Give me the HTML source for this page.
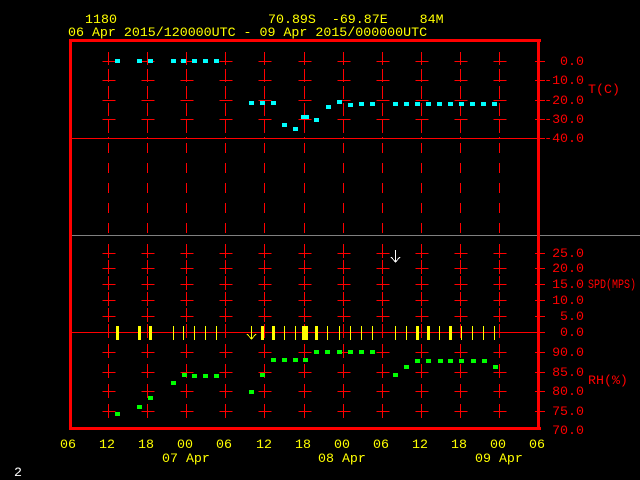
<!DOCTYPE html>
<html><head><meta charset="utf-8"><style>
html,body{margin:0;padding:0;background:#000;width:640px;height:480px;overflow:hidden}
svg{display:block}
text{font-family:"Liberation Mono",monospace;font-size:13.3px}
.y{fill:#ffff00}.r{fill:#ff0000}
</style></head><body>
<svg id="s" width="640" height="480" xmlns="http://www.w3.org/2000/svg">
<rect width="640" height="480" fill="#000"/>
<g id="g" shape-rendering="crispEdges"></g>
<text x="85" y="23" class="y">1180</text>
<text x="268" y="23" class="y" xml:space="preserve">70.89S  -69.87E    84M</text>
<text x="68" y="36" class="y">06 Apr 2015/120000UTC - 09 Apr 2015/000000UTC</text>
<g class="r" text-anchor="end">
<text x="584" y="65">0.0</text><text x="584" y="84">-10.0</text><text x="584" y="104">-20.0</text><text x="584" y="123">-30.0</text><text x="584" y="142">-40.0</text>
<text x="584" y="257">25.0</text><text x="584" y="272">20.0</text><text x="584" y="288">15.0</text><text x="584" y="304">10.0</text><text x="584" y="320">5.0</text><text x="584" y="336">0.0</text>
<text x="584" y="356">90.0</text><text x="584" y="376">85.0</text><text x="584" y="395">80.0</text><text x="584" y="415">75.0</text><text x="584" y="434">70.0</text>
</g>
<text x="588" y="93" class="r">T(C)</text>
<text x="588" y="288" class="r" textLength="48" lengthAdjust="spacingAndGlyphs">SPD(MPS)</text>
<text x="588" y="384" class="r">RH(%)</text>
<g class="y">
<text x="60" y="448">06</text><text x="99" y="448">12</text><text x="138" y="448">18</text><text x="177" y="448">00</text><text x="216" y="448">06</text><text x="256" y="448">12</text><text x="295" y="448">18</text><text x="334" y="448">00</text><text x="373" y="448">06</text><text x="412" y="448">12</text><text x="451" y="448">18</text><text x="490" y="448">00</text><text x="529" y="448">06</text>
<text x="162" y="462">07 Apr</text><text x="318" y="462">08 Apr</text><text x="475" y="462">09 Apr</text>
</g>
<text x="14" y="476" fill="#fff">2</text>
</svg>
<script>
var g=document.getElementById('g'),h='';
function L(x1,y1,x2,y2,c,w,d){h+='<line x1="'+x1+'" y1="'+y1+'" x2="'+x2+'" y2="'+y2+'" stroke="'+c+'" stroke-width="'+(w||1)+'"'+(d?' stroke-dasharray="'+d+'"':'')+'/>';}
function R(x,y,w,hh,c){h+='<rect x="'+x+'" y="'+y+'" width="'+w+'" height="'+hh+'" fill="'+c+'"/>';}
var red='#ff0000';
L(70,138.5,545,138.5,red);L(70,235.5,640,235.5,'#808080');L(70,332.5,545,332.5,red);
var cols=[];for(var k=0;k<11;k++)cols.push(Math.round(108+39.1*k)+0.5);
var tY=[61,80,100,119],sY=[253,268,284,300,316],rY=[352,372,391,411];
cols.forEach(function(x){
 L(x,52,x,138,red,1,'13 4');L(x,143,x,235,red,1,'10 10');
 L(x,244,x,340,red,1,'14 2');L(x,344,x,420,red,1,'14 6');
 tY.concat(sY,rY).forEach(function(y){L(x-6,y+.5,x+7,y+.5,red);});
});
tY.concat(sY,rY,[138,332]).forEach(function(y){L(535,y+.5,545,y+.5,red);});
R(69,39,472,3,red);R(69,39,3,391,red);R(69,427,472,3,red);R(537,39,3,391,red);
var cy='#00ffff';
[[117,61],[139,61],[150,61],[173,61],[183,61],[194,61],[205,61],[216,61],[251,103],[262,103],[273,103],[284,125],[295,129],[303,117],[306,117],[316,120],[328,107],[339,102],[350,105],[361,104],[372,104],[395,104],[406,104],[417,104],[428,104],[439,104],[450,104],[461,104],[472,104],[483,104],[494,104]].forEach(function(p){R(p[0]-2,p[1]-2,5,4,cy);});
var yl='#ffff00';
[[117,2],[139,2],[150,2],[173,1],[183,1],[194,1],[205,1],[216,1],[262,2],[273,2],[284,1],[295,1],[303,2],[306,2],[316,2],[327,1],[339,1],[350,1],[361,1],[372,1],[395,1],[406,1],[417,2],[428,2],[439,1],[450,2],[461,1],[472,1],[483,1],[494,1]].forEach(function(p){R(p[0]-(p[1]>1?1:0),326,p[1]+(p[1]>1?1:0),14,yl);});
L(251.5,326,251.5,339,yl);h+='<polyline points="247,334 251.5,339 256,334" fill="none" stroke="'+yl+'"/>';
L(395.5,250,395.5,262,'#fff');h+='<polyline points="391,257 395.5,262 400,257" fill="none" stroke="#fff"/>';
var gr='#00ff00';
[[117,414],[139,407],[150,398],[173,383],[184,375],[194,376],[205,376],[216,376],[251,392],[262,375],[273,360],[284,360],[295,360],[305,360],[316,352],[327,352],[339,352],[350,352],[361,352],[372,352],[395,375],[406,367],[417,361],[428,361],[440,361],[450,361],[461,361],[473,361],[484,361],[495,367]].forEach(function(p){R(p[0]-2,p[1]-2,5,4,gr);});
g.innerHTML=h;
</script>
</body></html>
